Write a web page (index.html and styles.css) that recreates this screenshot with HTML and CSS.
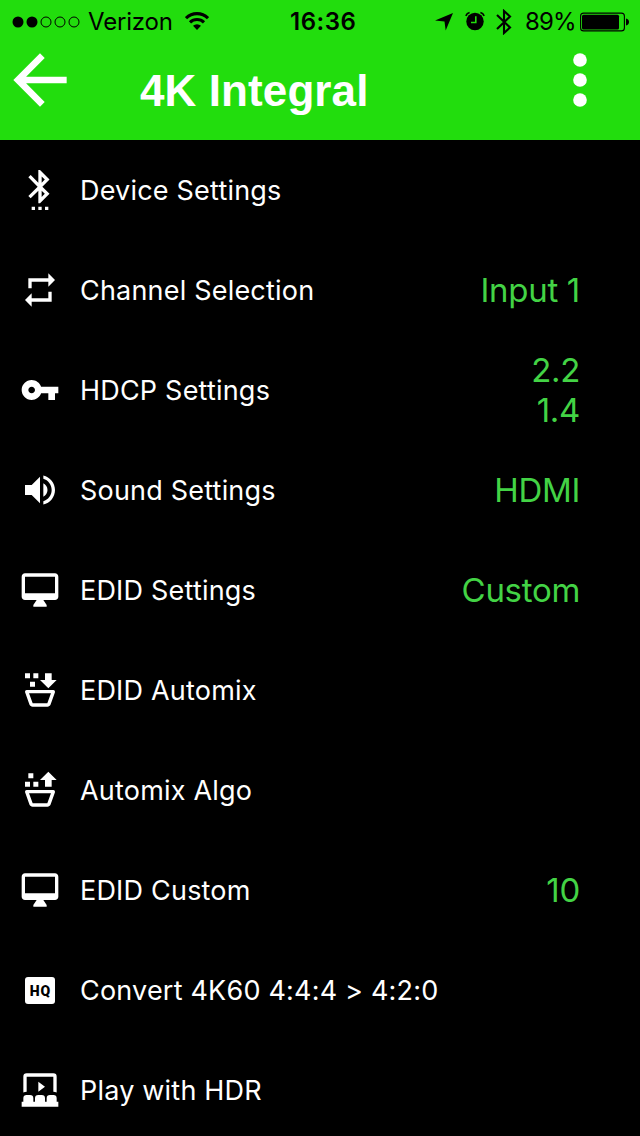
FILE: index.html
```
<!DOCTYPE html>
<html lang="en">
<head>
    <meta charset="UTF-8">
    <meta name="viewport" content="width=device-width, initial-scale=1.0">
    <title>4K Integral</title>
    <link rel="stylesheet" href="styles.css">
</head>
<body>
    <header>
        <div class="status-bar">
            <div class="status-left">
                <svg class="signal" width="68" height="12" viewBox="0 0 68 12">
                    <circle cx="6" cy="6" r="5.5"/>
                    <circle cx="20" cy="6" r="5.5"/>
                    <circle class="empty" cx="34" cy="6" r="5"/>
                    <circle class="empty" cx="48" cy="6" r="5"/>
                    <circle class="empty" cx="62" cy="6" r="5"/>
                </svg>
                <span class="carrier">Verizon</span>
                <svg class="wifi" width="24" height="18" viewBox="0 0 24 18">
                    <path class="line" d="M1 6.2a15.6 15.6 0 0 1 22 0M5 10.4a10 10 0 0 1 14 0"/>
                    <path d="M12 18l-4-4.2a5.8 5.8 0 0 1 8 0z"/>
                </svg>
            </div>
            <span class="time">16:36</span>
            <div class="status-right">
                <svg class="location" width="18" height="18" viewBox="0 0 18 18"><path d="M18 0L10.7 17.5 9.5 8.5 0 7.5z"/></svg>
                <svg class="alarm" width="20" height="20" viewBox="0 0 20 20">
                    <circle cx="10" cy="10.5" r="8.7"/>
                    <path class="ears" d="M.8 4.8A6 6 0 0 1 4.6 1.5M15.4 1.5a6 6 0 0 1 3.8 3.3"/>
                    <path class="hands" d="M10.8 5.2v6.3H6"/>
                </svg>
                <svg class="bluetooth" width="16" height="26" viewBox="0 0 16 26"><path d="M1 6l13 12.5L8 24V2l6 5.5L1 20"/></svg>
                <span class="percent">89%</span>
                <svg class="battery" width="49" height="20" viewBox="0 0 49 20">
                    <rect class="case" x=".6" y="1.1" width="43.8" height="17.8" rx="3"/>
                    <rect x="2" y="2.7" width="37" height="14.8" rx="1.5"/>
                    <path d="M46 6.5c4 .8 4 6.2 0 7z"/>
                </svg>
            </div>
        </div>
        <div class="title-bar">
            <svg class="nav-icon" viewBox="0 0 24 24"><path d="M20 11H7.83l5.59-5.59L12 4l-8 8 8 8 1.41-1.41L7.83 13H20z"/></svg>
            <h1>4K Integral</h1>
            <svg class="nav-icon" viewBox="0 0 24 24">
                <circle cx="12" cy="6" r="2.05"/>
                <circle cx="12" cy="12" r="2.05"/>
                <circle cx="12" cy="18" r="2.05"/>
            </svg>
        </div>
    </header>

    <ul class="menu">
        <li>
            <svg class="icon" viewBox="0 0 24 24"><path d="M11 24h2v-2h-2v2zm-4 0h2v-2H7v2zm8 0h2v-2h-2v2zm2.71-18.29L12 0h-1v7.59L6.41 3 5 4.41 10.59 10 5 15.59 6.41 17 11 12.41V20h1l5.71-5.71-4.3-4.29 4.3-4.29zM13 3.83l1.88 1.88L13 7.59V3.83zm1.88 10.46L13 16.17v-3.76l1.88 1.88z"/></svg>
            <span class="label">Device Settings</span>
        </li>
        <li>
            <svg class="icon" viewBox="0 0 24 24"><path d="M7 7h10v3l4-4-4-4v3H5v6h2V7zm10 10H7v-3l-4 4 4 4v-3h12v-6h-2v4z"/></svg>
            <span class="label">Channel Selection</span>
            <span class="value">Input 1</span>
        </li>
        <li>
            <svg class="icon" viewBox="0 0 24 24"><path d="M12.65 10C11.83 7.67 9.61 6 7 6c-3.31 0-6 2.69-6 6s2.69 6 6 6c2.61 0 4.83-1.67 5.65-4H17v4h4v-4h2v-4H12.65zM7 14c-1.1 0-2-.9-2-2s.9-2 2-2 2 .9 2 2-.9 2-2 2z"/></svg>
            <span class="label">HDCP Settings</span>
            <span class="value">2.2<br>1.4</span>
        </li>
        <li>
            <svg class="icon" viewBox="0 0 24 24"><path d="M3 9v6h4l5 5V4L7 9H3zm13.5 3c0-1.77-1.02-3.29-2.5-4.03v8.05c1.48-.73 2.5-2.25 2.5-4.02zM14 3.23v2.06c2.89.86 5 3.54 5 6.71s-2.11 5.85-5 6.71v2.06c4.01-.91 7-4.49 7-8.77s-2.99-7.86-7-8.77z"/></svg>
            <span class="label">Sound Settings</span>
            <span class="value">HDMI</span>
        </li>
        <li>
            <svg class="icon" viewBox="0 0 24 24"><path d="M21 2H3c-1.1 0-2 .9-2 2v12c0 1.1.9 2 2 2h7l-2 3v1h8v-1l-2-3h7c1.1 0 2-.9 2-2V4c0-1.1-.9-2-2-2zm0 12H3V4h18v10z"/></svg>
            <span class="label">EDID Settings</span>
            <span class="value">Custom</span>
        </li>
        <li>
            <svg class="icon" viewBox="0 0 24 24"><path d="M3 2h3v3H3zM6 7h3v3H6zM8 2h3v3H8zM17 11l-5-5h3V2h4v4h3zM7.5 22c-.78 0-1.46-.45-1.79-1.1L3.1 13.44C3 13.3 3 13.15 3 13a1 1 0 0 1 1-1h16a1 1 0 0 1 1 1c0 .15 0 .3-.07.44l-2.63 7.43C18 21.54 17.29 22 16.5 22zM7.61 20h8.78l2.18-6H5.42z"/></svg>
            <span class="label">EDID Automix</span>
        </li>
        <li>
            <svg class="icon" viewBox="0 0 24 24"><path d="M3 7h3v3H3zM5 2h3v3H5zM8 7h3v3H8zM17 1l-5 5h3v4h4V6h3zM7.5 22c-.78 0-1.46-.45-1.79-1.1L3.1 13.44C3 13.3 3 13.15 3 13a1 1 0 0 1 1-1h16a1 1 0 0 1 1 1c0 .15 0 .3-.07.44l-2.63 7.43C18 21.54 17.29 22 16.5 22zM7.61 20h8.78l2.18-6H5.42z"/></svg>
            <span class="label">Automix Algo</span>
        </li>
        <li>
            <svg class="icon" viewBox="0 0 24 24"><path d="M21 2H3c-1.1 0-2 .9-2 2v12c0 1.1.9 2 2 2h7l-2 3v1h8v-1l-2-3h7c1.1 0 2-.9 2-2V4c0-1.1-.9-2-2-2zm0 12H3V4h18v10z"/></svg>
            <span class="label">EDID Custom</span>
            <span class="value">10</span>
        </li>
        <li>
            <span class="icon"><span class="hq">HQ</span></span>
            <span class="label">Convert 4K60 4:4:4 &gt; 4:2:0</span>
        </li>
        <li>
            <svg class="icon" viewBox="0 0 24 24"><path d="M4 15h2a2 2 0 0 1 2 2v2h1v-2a2 2 0 0 1 2-2h2a2 2 0 0 1 2 2v2h1v-2a2 2 0 0 1 2-2h2a2 2 0 0 1 2 2v2h1v3H1v-3h1v-2a2 2 0 0 1 2-2M11 7l4 3-4 3zM4 2h16a2 2 0 0 1 2 2v9.54A3.9 3.9 0 0 0 20 13V4H4v9c-.73 0-1.41.19-2 .54V4a2 2 0 0 1 2-2z"/></svg>
            <span class="label">Play with HDR</span>
        </li>
    </ul>
</body>
</html>
```
FILE: styles.css
```
* {
    box-sizing: border-box;
}

body {
    margin: 0;
    height: 1136px;
    overflow: hidden;
    background-color: #000;
    color: #fff;
    font-family: Inter, Roboto, sans-serif;
}

svg {
    display: block;
    flex: none;
}

header {
    height: 140px;
    background-color: #22dd0d;
}

/* Status bar */
.status-bar {
    display: grid;
    grid-template-columns: 290px 66px 1fr;
    align-items: center;
    height: 40px;
    color: #000;
    font-size: 24px;
    line-height: 40px;
    white-space: nowrap;
}

.status-left,
.status-right {
    display: flex;
    align-items: center;
    height: 40px;
}

.status-left {
    padding-left: 12px;
}

.status-right {
    justify-content: flex-end;
    padding-right: 11px;
}

.signal {
    margin-top: 1px;
}

.signal .empty {
    fill: none;
    stroke: #000;
}

.carrier {
    width: 84px;
    margin: 1px 13px 0 8px;
    letter-spacing: -0.2px;
}

.wifi .line {
    fill: none;
    stroke: #000;
    stroke-width: 3.1;
}

.time {
    padding-top: 2px;
    font-weight: 600;
    letter-spacing: 0.5px;
}

.location {
    margin: 1px 12px 0 0;
}

.alarm {
    margin-right: 11px;
}

.alarm .ears {
    fill: none;
    stroke: #000;
    stroke-width: 1.6;
}

.alarm .hands {
    fill: none;
    stroke: #22dd0d;
    stroke-width: 1.6;
}

.bluetooth {
    margin: 1px 13px 0 0;
}

.bluetooth path {
    fill: none;
    stroke: #000;
    stroke-width: 2.1;
}

.percent {
    width: 49px;
    margin: 2px 6px 0 0;
    letter-spacing: -0.9px;
}

.battery {
    margin-top: 1px;
}

.battery .case {
    fill: none;
    stroke: #000;
    stroke-width: 1.1;
}

/* Title bar */
.title-bar {
    display: flex;
    height: 80px;
    padding-right: 20px;
}

.nav-icon {
    width: 80px;
    height: 80px;
    fill: #fff;
}

h1 {
    flex: 1;
    margin: 0;
    padding: 23px 0 0 60px;
    font-family: "Liberation Sans", Arial, sans-serif;
    font-size: 44px;
    line-height: 56px;
    letter-spacing: 0.1px;
}

/* Menu */
.menu {
    margin: 0;
    padding: 0;
    list-style: none;
}

.menu li {
    display: flex;
    align-items: center;
    height: 100px;
    padding: 0 60px 0 20px;
}

.icon {
    display: flex;
    align-items: center;
    justify-content: center;
    width: 40px;
    height: 40px;
    margin-right: 20px;
    fill: #fff;
}

.hq {
    width: 30px;
    height: 27px;
    padding-left: 1px;
    border-radius: 3px;
    background-color: #fff;
    color: #000;
    font-family: Roboto, sans-serif;
    font-size: 14px;
    font-weight: 900;
    line-height: 28px;
    letter-spacing: 1px;
    text-align: center;
}

.label {
    flex: 1;
    font-size: 27px;
    letter-spacing: 0.2px;
    white-space: nowrap;
}

.value {
    color: #43d345;
    font-size: 33px;
    line-height: 40px;
    letter-spacing: -0.3px;
    text-align: right;
}
```
